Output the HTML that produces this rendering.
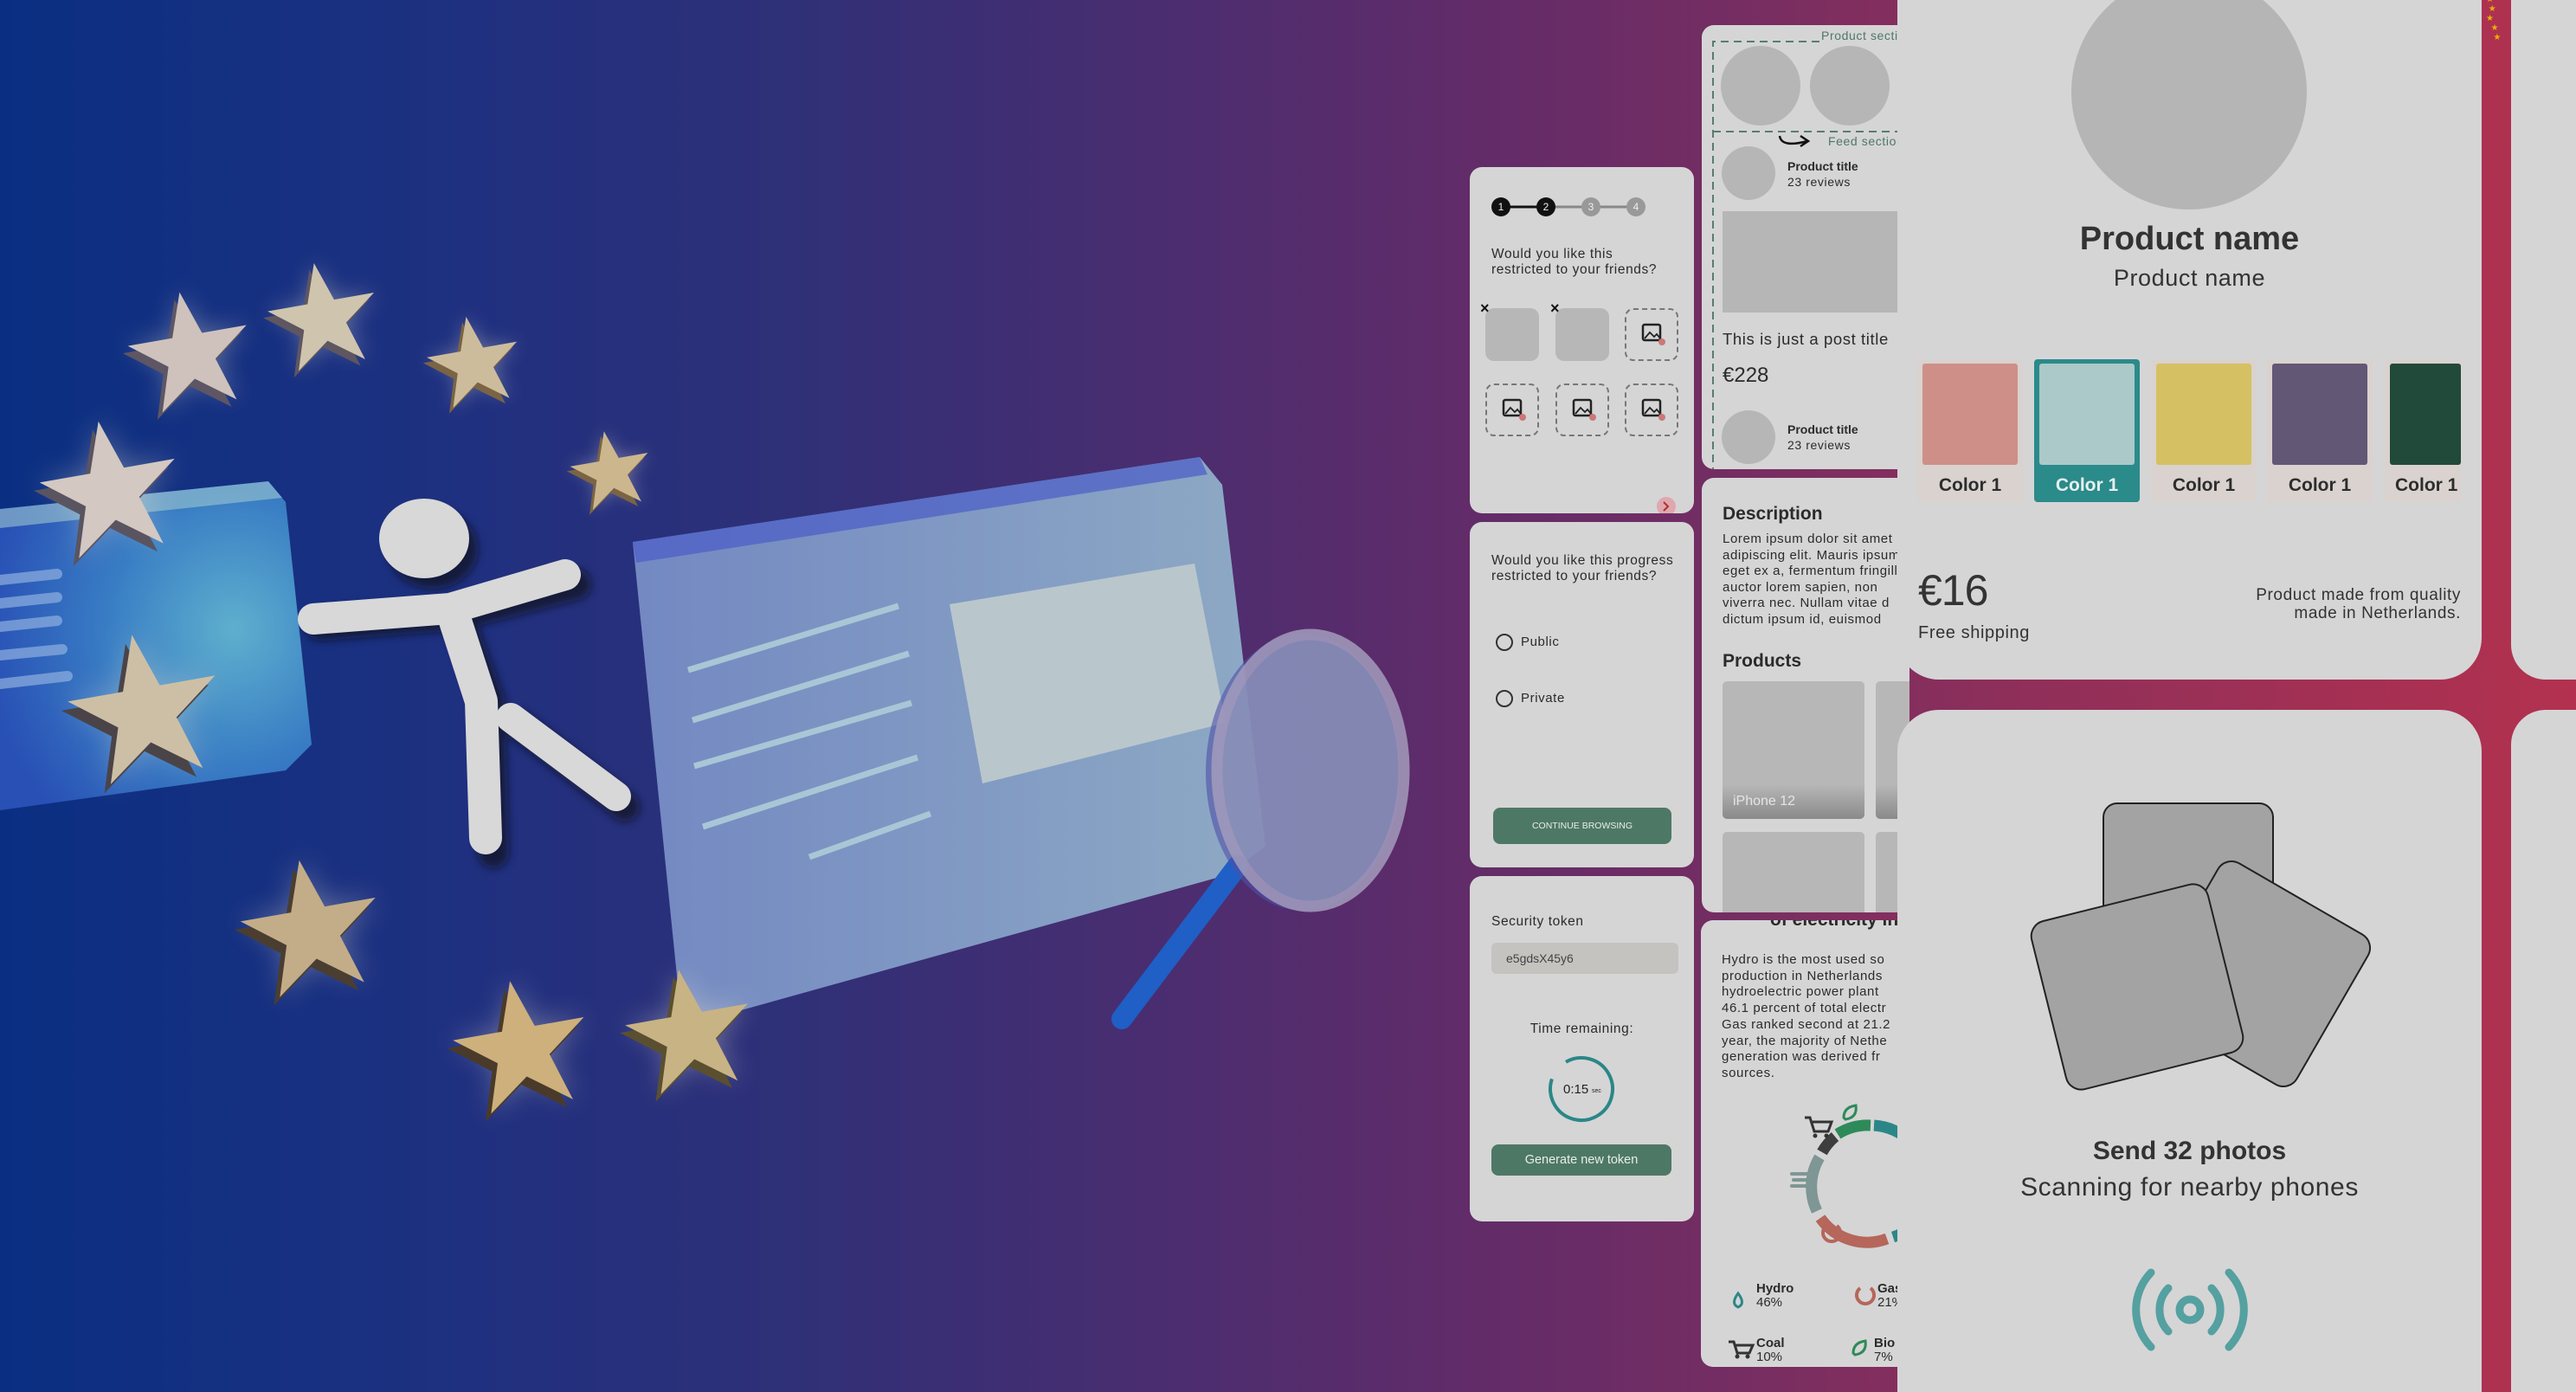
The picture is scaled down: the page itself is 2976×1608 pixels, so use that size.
<!DOCTYPE html>
<html style="width:2976px;height:1608px;overflow:hidden"><head><meta charset="utf-8"><style>
*{margin:0;padding:0;box-sizing:border-box}
body{width:2976px;height:1608px;overflow:hidden;position:relative;font-family:"Liberation Sans",sans-serif;color:#2b2b2b;
background:linear-gradient(90deg,#0a2f82 0%,#1f3080 18%,#2e3078 30%,#4a2d70 45%,#632c68 58%,#722d63 66%,#8e2f5a 78%,#b3314f 100%)}
.a{position:absolute}
.card{position:absolute;background:#d5d5d6;border-radius:14px;overflow:hidden}
.t{position:absolute;white-space:nowrap}
.b{font-weight:bold}
.tile{position:absolute;width:62px;height:61px;border-radius:10px}
.f{background:#b7b7b7}
.d{border:2px dashed #777}
.x{position:absolute;left:-6px;top:-10px;font-size:18px;font-weight:bold;color:#111}
.sw{position:absolute;top:415px;width:122px;height:165px;background:#d9d2cf;border-radius:4px}
.sw div{position:absolute;left:6px;top:5px;right:6px;height:117px;border-radius:3px}
.sw span{position:absolute;left:0;right:0;top:134px;text-align:center;font-weight:bold;font-size:21px;color:#2d2d2d}
.wide{letter-spacing:0.6px}
</style></head><body>

<svg class="a" style="left:0;top:0" width="1700" height="1608" viewBox="0 0 1700 1608">
<defs>
<radialGradient id="lc" cx="0.75" cy="0.45" r="0.8"><stop offset="0" stop-color="#62b6d2"/><stop offset="0.5" stop-color="#3b82c8"/><stop offset="1" stop-color="#2a52b8"/></radialGradient>
<linearGradient id="rc" x1="0" y1="0" x2="1" y2="0"><stop offset="0" stop-color="#7a90c8"/><stop offset="1" stop-color="#93b4cc"/></linearGradient>
<filter id="gl" x="-50%" y="-50%" width="200%" height="200%"><feGaussianBlur stdDeviation="10"/></filter>
<filter id="sh"><feGaussianBlur stdDeviation="5"/></filter>
<path id="st" d="M0,-50 L12,-15 L48,-15 L19,7 L30,42 L0,20 L-30,42 L-19,7 L-48,-15 L-12,-15Z"/>
</defs>
<polygon points="0,588 310,556 330,580 360,860 330,890 0,936" fill="url(#lc)" opacity="0.95"/>
<polygon points="0,588 310,556 326,575 0,610" fill="#9cc6d0" opacity="0.6"/>
<g stroke="#8fb0e0" stroke-width="12" stroke-linecap="round" opacity="0.7">
<line x1="0" y1="670" x2="66" y2="663"/><line x1="0" y1="697" x2="66" y2="690"/><line x1="0" y1="724" x2="66" y2="717"/><line x1="0" y1="757" x2="72" y2="750"/><line x1="0" y1="790" x2="78" y2="781"/></g>
<polygon points="731,626 1386,528 1412,560 1462,977 1420,1010 788,1186" fill="url(#rc)" opacity="0.92"/>
<polygon points="731,626 1386,528 1395,548 735,650" fill="#4a5cc8" opacity="0.7"/>
<polygon points="1097,698 1380,651 1416,835 1135,905" fill="#b9c7cc"/>
<g stroke="#a9c6d6" stroke-width="7"><line x1="795" y1="774" x2="1038" y2="700"/><line x1="800" y1="832" x2="1050" y2="755"/><line x1="802" y1="885" x2="1053" y2="812"/><line x1="812" y1="955" x2="1060" y2="875"/><line x1="935" y1="990" x2="1075" y2="940"/></g>
<line x1="1430" y1="1000" x2="1296" y2="1177" stroke="#1f5fc6" stroke-width="24" stroke-linecap="round"/>
<ellipse cx="1505" cy="892" rx="112" ry="160" fill="#4f50a8" opacity="0.6"/>
<ellipse cx="1514" cy="890" rx="108" ry="157" fill="#8d93b8" opacity="0.85" stroke="#a49cbc" stroke-width="13"/>
<g filter="url(#sh)" fill="#111" opacity="0.6">
<ellipse cx="500" cy="634" rx="52" ry="46"/>
<polyline points="370,722 530,710 665,675" fill="none" stroke="#111" stroke-width="36" stroke-linecap="round"/>
<polyline points="530,715 565,810 570,985" fill="none" stroke="#111" stroke-width="36" stroke-linecap="round"/>
<line x1="600" y1="838" x2="722" y2="932" stroke="#111" stroke-width="34" stroke-linecap="round"/>
</g>
<ellipse cx="490" cy="622" rx="52" ry="46" fill="#d8d8d8"/>
<polyline points="362,715 520,703 653,664" fill="none" stroke="#d8d8d8" stroke-width="36" stroke-linejoin="round" stroke-linecap="round"/>
<polyline points="522,705 556,810 561,968" fill="none" stroke="#d8d8d8" stroke-width="38" stroke-linecap="round" stroke-linejoin="round"/>
<line x1="590" y1="829" x2="712" y2="920" stroke="#d8d8d8" stroke-width="34" stroke-linecap="round"/>
<g>
<g transform="translate(220,409) rotate(-10) scale(1.45)"><use href="#st" fill="#f4ead0" opacity="0.35" filter="url(#gl)"/><use href="#st" x="-5" y="5" fill="#5e5664"/><use href="#st" fill="#cfc2bc"/></g>
<g transform="translate(374,368) rotate(-10) scale(1.3)"><use href="#st" fill="#f4ead0" opacity="0.35" filter="url(#gl)"/><use href="#st" x="-5" y="5" fill="#5e5660"/><use href="#st" fill="#cfc4ae"/></g>
<g transform="translate(548,420) rotate(-10) scale(1.1)"><use href="#st" fill="#f4ead0" opacity="0.35" filter="url(#gl)"/><use href="#st" x="-5" y="5" fill="#7a6444"/><use href="#st" fill="#cdbc9c"/></g>
<g transform="translate(706,545) rotate(-10) scale(0.95)"><use href="#st" fill="#f4ead0" opacity="0.35" filter="url(#gl)"/><use href="#st" x="-5" y="5" fill="#7a6444"/><use href="#st" fill="#cbb68e"/></g>
<g transform="translate(128,568) rotate(-10) scale(1.65)"><use href="#st" fill="#f4ead0" opacity="0.35" filter="url(#gl)"/><use href="#st" x="-5" y="5" fill="#5a5460"/><use href="#st" fill="#d3c8c2"/></g>
<g transform="translate(168,822) rotate(-10) scale(1.8)"><use href="#st" fill="#f4ead0" opacity="0.35" filter="url(#gl)"/><use href="#st" x="-5" y="5" fill="#4a4448"/><use href="#st" fill="#cdbfa5"/></g>
<g transform="translate(360,1075) rotate(-10) scale(1.65)"><use href="#st" fill="#f4ead0" opacity="0.35" filter="url(#gl)"/><use href="#st" x="-5" y="5" fill="#4a3e30"/><use href="#st" fill="#c3ac88"/></g>
<g transform="translate(603,1212) rotate(-10) scale(1.6)"><use href="#st" fill="#f4ead0" opacity="0.35" filter="url(#gl)"/><use href="#st" x="-5" y="5" fill="#4a3a2a"/><use href="#st" fill="#cdb07c"/></g>
<g transform="translate(797,1194) rotate(-10) scale(1.5)"><use href="#st" fill="#f4ead0" opacity="0.35" filter="url(#gl)"/><use href="#st" x="-5" y="5" fill="#5a5030"/><use href="#st" fill="#c8b384"/></g>
</g>
</svg>

<!-- Column 1 -->
<div class="card" style="left:1698px;top:193px;width:259px;height:400px">
 <svg class="a" style="left:0;top:0" width="259" height="80">
  <line x1="36" y1="46" x2="88" y2="46" stroke="#111" stroke-width="3"/><line x1="88" y1="46" x2="192" y2="46" stroke="#888" stroke-width="3"/>
  <circle cx="36" cy="46" r="11" fill="#111"/><circle cx="88" cy="46" r="11" fill="#111"/><circle cx="140" cy="46" r="11" fill="#999"/><circle cx="192" cy="46" r="11" fill="#999"/>
  <g font-size="12" fill="#eee" text-anchor="middle" font-family="Liberation Sans"><text x="36" y="50">1</text><text x="88" y="50">2</text><text x="140" y="50">3</text><text x="192" y="50">4</text></g>
 </svg>
 <div class="t wide" style="left:25px;top:92px;font-size:15.5px;line-height:18px">Would you like this<br>restricted to your friends?</div>
 <div class="tile f" style="left:18px;top:163px"><span class="x">×</span></div>
 <div class="tile f" style="left:99px;top:163px"><span class="x">×</span></div>
 <div class="tile d" style="left:179px;top:163px"></div>
 <div class="tile d" style="left:18px;top:250px"></div>
 <div class="tile d" style="left:99px;top:250px"></div>
 <div class="tile d" style="left:179px;top:250px"></div>
 <svg class="a" style="left:0;top:0" width="259" height="400"><g fill="none" stroke="#222" stroke-width="2.5">
  <rect x="200" y="182" width="20" height="18" rx="2"/><rect x="39" y="269" width="20" height="18" rx="2"/><rect x="120" y="269" width="20" height="18" rx="2"/><rect x="200" y="269" width="20" height="18" rx="2"/>
  <path d="M202,198 l6,-7 l5,5 l3,-3 l4,5 M41,285 l6,-7 l5,5 l3,-3 l4,5 M122,285 l6,-7 l5,5 l3,-3 l4,5 M202,285 l6,-7 l5,5 l3,-3 l4,5" stroke-width="1.8"/></g>
  <g fill="#c77"><circle cx="222" cy="202" r="4"/><circle cx="61" cy="289" r="4"/><circle cx="142" cy="289" r="4"/><circle cx="222" cy="289" r="4"/></g>
  <circle cx="227" cy="392" r="11" fill="#e0a8ae"/><path d="M224,387 L229,392 L224,397" stroke="#a33" stroke-width="2" fill="none"/>
 </svg>
</div>
<div class="card" style="left:1698px;top:603px;width:259px;height:399px">
 <div class="t wide" style="left:25px;top:36px;font-size:15.5px;line-height:18px">Would you like this progress<br>restricted to your friends?</div>
 <div class="a" style="left:30px;top:129px;width:20px;height:20px;border:2.5px solid #333;border-radius:50%"></div>
 <div class="t wide" style="left:59px;top:130px;font-size:15px">Public</div>
 <div class="a" style="left:30px;top:194px;width:20px;height:20px;border:2.5px solid #333;border-radius:50%"></div>
 <div class="t wide" style="left:59px;top:195px;font-size:15px">Private</div>
 <div class="a" style="left:27px;top:330px;width:206px;height:42px;background:#4e7866;border-radius:8px;color:#e8efe9;font-size:10.5px;text-align:center;line-height:42px">CONTINUE BROWSING</div>
</div>
<div class="card" style="left:1698px;top:1012px;width:259px;height:399px">
 <div class="t wide" style="left:25px;top:44px;font-size:15.5px">Security token</div>
 <div class="a" style="left:25px;top:77px;width:216px;height:36px;background:#c5c3c0;border-radius:6px;font-size:14px;line-height:36px;padding-left:17px;color:#444">e5gdsX45y6</div>
 <div class="t wide" style="left:0;width:259px;text-align:center;top:168px;font-size:15.5px">Time remaining:</div>
 <svg class="a" style="left:89px;top:206px" width="80" height="80"><circle cx="40" cy="40" r="36" fill="none" stroke="#2b8787" stroke-width="4" stroke-dasharray="200 26" transform="rotate(-120 40 40)"/><text x="19" y="45" font-size="15" font-family="Liberation Sans" fill="#222">0:15</text><text x="52" y="44" font-size="7" fill="#222" font-family="Liberation Sans">sec</text></svg>
 <div class="a" style="left:25px;top:310px;width:208px;height:36px;background:#4e7866;border-radius:8px;color:#e8efe9;font-size:14.5px;text-align:center;line-height:36px">Generate new token</div>
</div>

<!-- Column 2 -->
<div class="card" style="left:1966px;top:29px;width:240px;height:513px">
 <svg class="a" style="left:0;top:0" width="240" height="513"><g fill="none" stroke="#587e6a" stroke-width="2" stroke-dasharray="9 6">
  <path d="M136,19 L13,19 L13,513"/><line x1="13" y1="123" x2="240" y2="123"/></g>
  <circle cx="68" cy="70" r="46" fill="#b6b6b6"/><circle cx="171" cy="70" r="46" fill="#b6b6b6"/>
  <path d="M90,128 Q92,142 122,134" stroke="#111" stroke-width="2.5" fill="none"/><path d="M114,128 L123,134 L114,140" stroke="#111" stroke-width="2.5" fill="none"/>
  <circle cx="54" cy="171" r="31" fill="#b6b6b6"/><circle cx="54" cy="476" r="31" fill="#b6b6b6"/>
  <rect x="24" y="215" width="216" height="117" fill="#b6b6b6"/>
 </svg>
 <div class="t wide" style="left:138px;top:4px;font-size:14px;color:#4e7866">Product section</div>
 <div class="t wide" style="left:146px;top:126px;font-size:14px;color:#4e7866">Feed section</div>
 <div class="t b" style="left:99px;top:155px;font-size:14px">Product title</div>
 <div class="t wide" style="left:99px;top:173px;font-size:14px">23 reviews</div>
 <div class="t wide" style="left:24px;top:352px;font-size:18.5px">This is just a post title</div>
 <div class="t" style="left:24px;top:391px;font-size:24px">€228</div>
 <div class="t b" style="left:99px;top:459px;font-size:14px">Product title</div>
 <div class="t wide" style="left:99px;top:477px;font-size:14px">23 reviews</div>
</div>
<div class="card" style="left:1966px;top:552px;width:240px;height:502px">
 <div class="t b" style="left:24px;top:30px;font-size:21px">Description</div>
 <div class="t wide" style="left:24px;top:62px;font-size:15px;line-height:18.6px">Lorem ipsum dolor sit amet<br>adipiscing elit. Mauris ipsum<br>eget ex a, fermentum fringilla<br>auctor lorem sapien, non<br>viverra nec. Nullam vitae d<br>dictum ipsum id, euismod</div>
 <div class="t b" style="left:24px;top:200px;font-size:21px">Products</div>
 <div class="a" style="left:24px;top:235px;width:164px;height:159px;border-radius:5px;background:linear-gradient(180deg,#b7b7b7 75%,#8a8a8a)"></div>
 <div class="t" style="left:36px;top:365px;font-size:16px;color:#e5e5e5">iPhone 12</div>
 <div class="a" style="left:201px;top:235px;width:60px;height:159px;border-radius:5px;background:linear-gradient(180deg,#b7b7b7 75%,#8a8a8a)"></div>
 <div class="a" style="left:24px;top:409px;width:164px;height:100px;border-radius:5px;background:#b7b7b7"></div>
 <div class="a" style="left:201px;top:409px;width:60px;height:100px;border-radius:5px;background:#b7b7b7"></div>
</div>
<div class="card" style="left:1965px;top:1063px;width:240px;height:516px">
 <div class="t b" style="left:80px;top:-12px;font-size:21px">of electricity in t</div>
 <div class="t wide" style="left:24px;top:37px;font-size:15px;line-height:18.7px">Hydro is the most used so<br>production in Netherlands<br>hydroelectric power plant<br>46.1 percent of total electr<br>Gas ranked second at 21.2<br>year, the majority of Nethe<br>generation was derived fr<br>sources.</div>
 <svg class="a" style="left:0;top:0" width="240" height="516" fill="none">
  <g stroke-width="13">
   <path d="M200,237 A66,66 0 0 1 262,303" stroke="#2b8787"/>
   <path d="M158,247 A66,66 0 0 1 196,237" stroke="#2e8a58"/>
   <path d="M140,268 A66,66 0 0 1 155,250" stroke="#3e3e3e"/>
   <path d="M134,336 A66,66 0 0 1 137,274" stroke="#7e9694"/>
   <path d="M215,368 A66,66 0 0 1 138,344" stroke="#b6665a"/>
   <path d="M222,366 A66,66 0 0 0 262,330" stroke="#2b8787"/>
  </g>
  <path d="M120,228 l6,0 l5,16 l16,0 l4,-11 l-22,0" stroke="#333" stroke-width="3"/><circle cx="132" cy="249" r="2.5" fill="#333"/><circle cx="145" cy="249" r="2.5" fill="#333"/>
  <path d="M165,228 q0,-12 14,-14 q2,14 -12,16z" stroke="#2e8a58" stroke-width="3"/>
  <path d="M105,293 h18 M107,300 h22 M105,307 h16" stroke="#7e9694" stroke-width="4" stroke-linecap="round"/>
  <path d="M145,353 a10,10 0 1 0 12,0" stroke="#b6665a" stroke-width="4"/>
  <path d="M43,431 q-9,12 0,16 q9,-4 0,-16z" stroke="#2b8787" stroke-width="3"/>
  <path d="M184,425 a10,10 0 1 0 12,0" stroke="#b6665a" stroke-width="4"/>
  <path d="M32,487 l6,0 l4,13 l14,0 l4,-9 l-20,0" stroke="#333" stroke-width="3"/><circle cx="42" cy="504" r="2.5" fill="#333"/><circle cx="54" cy="504" r="2.5" fill="#333"/>
  <path d="M176,500 q0,-12 14,-14 q2,14 -12,16z" stroke="#2e8a58" stroke-width="3"/>
 </svg>
 <div class="t b" style="left:64px;top:418px;font-size:15px;line-height:16px">Hydro<br><span style="font-weight:normal">46%</span></div>
 <div class="t b" style="left:204px;top:418px;font-size:15px;line-height:16px">Gas<br><span style="font-weight:normal">21%</span></div>
 <div class="t b" style="left:64px;top:481px;font-size:15px;line-height:16px">Coal<br><span style="font-weight:normal">10%</span></div>
 <div class="t b" style="left:200px;top:481px;font-size:15px;line-height:16px">Bio<br><span style="font-weight:normal">7%</span></div>
</div>

<!-- Big cards -->
<div class="a" style="left:2192px;top:0;width:675px;height:785px;background:#d5d5d6;border-radius:0 0 48px 48px;overflow:hidden">
 <div class="a" style="left:201px;top:-30px;width:272px;height:272px;border-radius:50%;background:#b5b5b5"></div>
 <div class="t b" style="left:0;width:675px;text-align:center;top:255px;font-size:38px;color:#333">Product name</div>
 <div class="t wide" style="left:0;width:675px;text-align:center;top:306px;font-size:27px;color:#333">Product name</div>
</div>
<div class="sw" style="left:2215px"><div style="background:#cd8f88"></div><span>Color 1</span></div>
<div class="sw" style="left:2350px;background:#2b8a8a"><div style="background:#abc9c8"></div><span style="color:#e6f0ef">Color 1</span></div>
<div class="sw" style="left:2485px"><div style="background:#d5c163"></div><span>Color 1</span></div>
<div class="sw" style="left:2619px"><div style="background:#635776"></div><span>Color 1</span></div>
<div class="sw" style="left:2755px;width:88px;overflow:hidden;border-radius:4px 0 0 4px"><div style="background:#214a3a;right:0"></div><span style="left:12px;right:auto">Color 1</span></div>
<div class="t" style="left:2216px;top:653px;font-size:50px;color:#333;letter-spacing:-1px">€16</div>
<div class="t wide" style="left:2216px;top:720px;font-size:20px;color:#333">Free shipping</div>
<div class="t wide" style="left:2400px;width:443px;text-align:right;top:677px;font-size:19px;line-height:21px;color:#333">Product made from quality<br>made in Netherlands.</div>

<div class="a" style="left:2192px;top:820px;width:675px;height:788px;background:#d5d5d6;border-radius:48px 48px 0 0;overflow:hidden">
 <svg class="a" style="left:130px;top:100px" width="420" height="360">
  <rect x="108" y="8" width="196" height="240" rx="16" fill="#a3a3a3" stroke="#222" stroke-width="2"/>
  <g transform="translate(286,205) rotate(30)"><rect x="-100" y="-100" width="200" height="200" rx="18" fill="#a3a3a3" stroke="#222" stroke-width="2"/></g>
  <g transform="translate(147,220) rotate(-14)"><rect x="-105" y="-100" width="210" height="200" rx="18" fill="#a3a3a3" stroke="#222" stroke-width="2"/></g>
 </svg>
 <div class="t b" style="left:0;width:675px;text-align:center;top:493px;font-size:30px;color:#333">Send 32 photos</div>
 <div class="t wide" style="left:0;width:675px;text-align:center;top:535px;font-size:30px;color:#333">Scanning for nearby phones</div>
 <svg class="a" style="left:268px;top:640px" width="140" height="110" fill="none" stroke="#55a0a0" stroke-width="9" stroke-linecap="round">
  <circle cx="70" cy="53" r="12"/>
  <path d="M45,28 A36,36 0 0 0 45,78"/><path d="M95,28 A36,36 0 0 1 95,78"/>
  <path d="M25,10 A62,62 0 0 0 25,96"/><path d="M115,10 A62,62 0 0 1 115,96"/>
 </svg>
</div>
<div class="a" style="left:2901px;top:0;width:75px;height:785px;background:#d5d5d6;border-radius:0 0 0 40px"></div>
<div class="a" style="left:2901px;top:820px;width:75px;height:788px;background:#d5d5d6;border-radius:40px 0 0 0"></div>
<div class="t" style="left:2872px;top:-6px;font-size:10px;color:#e5b400;line-height:11px">★<br>&nbsp;★<br>★<br>&nbsp;&nbsp;★<br>&nbsp;&nbsp;&nbsp;★</div>
</body></html>
